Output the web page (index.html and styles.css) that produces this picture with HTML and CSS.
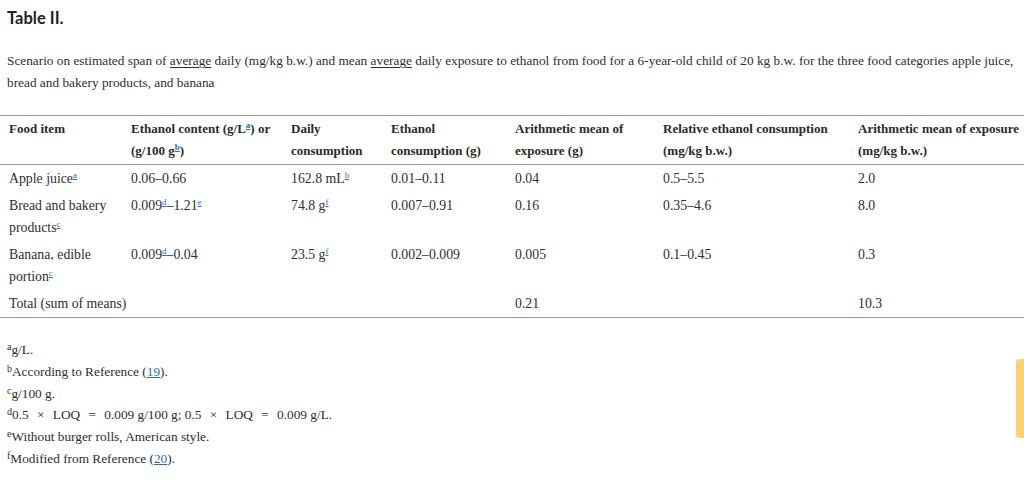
FILE: index.html
```html
<!DOCTYPE html>
<html lang="en">
<head>
<meta charset="utf-8">
<title>Table II.</title>
<link rel="stylesheet" href="styles.css">
</head>
<body>
<div class="page">
  <h2 class="title">Table II.</h2>
  <p class="caption">Scenario on estimated span of <u>average</u> daily (mg/kg b.w.) and mean <u>average</u> daily exposure to ethanol from food for a 6-year-old child of 20 kg b.w. for the three food categories apple juice, bread and bakery products, and banana</p>
  <table class="data">
    <colgroup>
      <col class="c1"><col class="c2"><col class="c3"><col class="c4"><col class="c5"><col class="c6"><col class="c7">
    </colgroup>
    <thead>
      <tr>
        <th>Food item</th>
        <th>Ethanol content (g/L<sup><a href="#">a</a></sup>) or (g/100 g<sup><a href="#">b</a></sup>)</th>
        <th>Daily consumption</th>
        <th>Ethanol consumption (g)</th>
        <th>Arithmetic mean of exposure (g)</th>
        <th>Relative ethanol consumption (mg/kg b.w.)</th>
        <th>Arithmetic mean of exposure (mg/kg b.w.)</th>
      </tr>
    </thead>
    <tbody>
      <tr>
        <td>Apple juice<sup><a href="#">a</a></sup></td>
        <td>0.06–0.66</td>
        <td>162.8 mL<sup><a href="#">b</a></sup></td>
        <td>0.01–0.11</td>
        <td>0.04</td>
        <td>0.5–5.5</td>
        <td>2.0</td>
      </tr>
      <tr>
        <td>Bread and bakery products<sup><a href="#">c</a></sup></td>
        <td>0.009<sup><a href="#">d</a></sup>–1.21<sup><a href="#">e</a></sup></td>
        <td>74.8 g<sup><a href="#">f</a></sup></td>
        <td>0.007–0.91</td>
        <td>0.16</td>
        <td>0.35–4.6</td>
        <td>8.0</td>
      </tr>
      <tr>
        <td>Banana, edible portion<sup><a href="#">c</a></sup></td>
        <td>0.009<sup><a href="#">d</a></sup>–0.04</td>
        <td>23.5 g<sup><a href="#">f</a></sup></td>
        <td>0.002–0.009</td>
        <td>0.005</td>
        <td>0.1–0.45</td>
        <td>0.3</td>
      </tr>
      <tr>
        <td>Total (sum of means)</td>
        <td></td>
        <td></td>
        <td></td>
        <td>0.21</td>
        <td></td>
        <td>10.3</td>
      </tr>
    </tbody>
  </table>
  <div class="notes">
    <p><sup>a</sup>g/L.</p>
    <p><sup>b</sup>According to Reference (<a href="#">19</a>).</p>
    <p><sup>c</sup>g/100 g.</p>
    <p><sup>d</sup>0.5 <span class="op">×</span> LOQ <span class="op">=</span> 0.009 g/100 g; 0.5 <span class="op">×</span> LOQ <span class="op">=</span> 0.009 g/L.</p>
    <p><sup>e</sup>Without burger rolls, American style.</p>
    <p><sup>f</sup>Modified from Reference (<a href="#">20</a>).</p>
  </div>
</div>
<div class="side-tab"></div>
</body>
</html>
```

FILE: styles.css
```css
html, body {
  margin: 0;
  padding: 0;
  background: #fff;
}
body {
  font-family: "Liberation Serif", serif;
  color: #2e2e2e;
  width: 1024px;
  height: 482px;
  overflow: hidden;
  position: relative;
}
.page {
  padding-top: 6px;
}
.title {
  font-family: Lato, "Open Sans", sans-serif;
  font-weight: 700;
  font-size: 16.5px;
  line-height: 24px;
  margin: 0 0 0 7px;
  color: #1f1f1f;
}
.caption {
  font-size: 13.3px;
  line-height: 22px;
  margin: 20px 0 0 7px;
  padding-right: 6px;
}
.caption u {
  text-decoration-thickness: 1px;
  text-underline-offset: 2px;
}
.data {
  margin-top: 21px;
  width: 1024px;
  border-collapse: collapse;
  table-layout: fixed;
  font-size: 13.8px;
  line-height: 22px;
}
.c1 { width: 128px; }
.c2 { width: 160px; }
.c3 { width: 100px; }
.c4 { width: 124px; }
.c5 { width: 148px; }
.c6 { width: 195px; }
.c7 { width: 169px; }
.data thead tr {
  border-top: 1.5px solid #9a9a9a;
  border-bottom: 1.5px solid #9a9a9a;
}
.data th {
  text-align: left;
  font-weight: 700;
  font-size: 13px;
  vertical-align: top;
  padding: 2px 8px 2px 3px;
  color: #2a2a2a;
}
.data th:last-child {
  padding-right: 0;
}
.data td {
  vertical-align: top;
  padding: 3px 0 2px 3px;
}
.data th:first-child,
.data td:first-child {
  padding-left: 9px;
}
.data tbody tr:last-child {
  border-bottom: 1.5px solid #9a9a9a;
}
sup {
  font-size: 9px;
  line-height: 0;
  vertical-align: 5px;
}
a {
  color: #2e6ea5;
  text-decoration: underline;
  text-decoration-thickness: 1px;
}
.notes {
  margin: 21px 0 0 7px;
  font-size: 13.3px;
  line-height: 21.8px;
}
.notes p {
  margin: 0;
}
.notes sup {
  font-size: 10px;
  vertical-align: 4px;
}
.op {
  padding: 0 5px;
}
.side-tab {
  position: absolute;
  right: 0;
  top: 359px;
  width: 8px;
  height: 79px;
  background: #fbd36f;
  border-radius: 3px 0 0 3px;
}
```
